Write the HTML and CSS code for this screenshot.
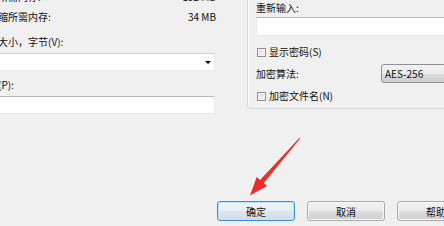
FILE: index.html
```html
<!DOCTYPE html>
<html lang="zh-CN">
<head>
<meta charset="utf-8">
<title>添加到压缩包</title>
<link rel="stylesheet" href="styles.css">
</head>
<body>
<div class="dialog">
  <div class="top">
    <div class="left">
      <div class="row r1"><span>压缩所需内存:</span><span class="val">192 MB</span></div>
      <div class="row r2"><span>解压缩所需内存:</span><span class="val">34 MB</span></div>
      <div class="label l3">分卷大小，字节(V):</div>
      <div class="field select"><span class="caret"></span></div>
      <div class="label l4">参数(P):</div>
      <div class="field input"></div>
    </div>
    <div class="group">
      <div class="label">重新输入:</div>
      <div class="field input pw"></div>
      <div class="check c1"><span class="box"></span><span>显示密码(S)</span></div>
      <div class="algo">
        <span class="algo-label">加密算法:</span>
        <span class="combo">AES-256</span>
      </div>
      <div class="check c2"><span class="box"></span><span>加密文件名(N)</span></div>
    </div>
  </div>
  <div class="buttons">
    <button class="btn default">确定</button>
    <button class="btn">取消</button>
    <button class="btn">帮助</button>
  </div>
</div>
<svg class="arrow" width="444" height="226" viewBox="0 0 444 226">
  <polygon points="300.4,138.3 299.6,137.7 260.1,179.9 256.7,176.9 250,195.5 267.2,186.1 263.9,183.1" fill="#e8302a"/>
</svg>
</body>
</html>
```
FILE: styles.css
```css
html, body {
  margin: 0;
  padding: 0;
  background: #f0f0f0;
  overflow: hidden;
}
body {
  width: 444px;
  height: 226px;
  position: relative;
  font-family: "Noto Sans CJK SC", "Noto Sans", sans-serif;
  font-size: 10px;
  color: #0f0f0f;
}
.dialog {
  display: flex;
  flex-direction: column;
}
.top {
  display: flex;
  margin-top: -20px;
  margin-left: -22px;
  height: 135px;
}
.left {
  flex: none;
  width: 237px;
  display: flex;
  flex-direction: column;
  padding-top: 10px;
}
.row {
  display: flex;
  justify-content: space-between;
  line-height: 14px;
  height: 14px;
}
.val {
  margin-right: -1px;
}
.r2 { margin-top: 6px; }
.label {
  line-height: 14px;
  height: 14px;
}
.l3 { margin-top: 11px; }
.l4 { margin-top: 7px; }
.field {
  box-sizing: border-box;
  background: #fff;
  border: 1px solid #e3e9ef;
  border-top-color: #b5b8bf;
  height: 18px;
}
.select {
  margin-top: 4px;
  border-top-color: #cfd2d6;
  display: flex;
  justify-content: flex-end;
  align-items: center;
  padding-right: 3px;
}
.caret {
  width: 0;
  height: 0;
  border-left: 3px solid transparent;
  border-right: 3px solid transparent;
  border-top: 3px solid #000;
}
.input { margin-top: 4px; }
.group {
  flex: none;
  margin-left: 32px;
  width: 230px;
  box-sizing: border-box;
  height: 129px;
  border: 1px solid #d5d9dc;
  border-radius: 3px;
  box-shadow: inset 1px 1px 0 #fafafa;
  padding: 20px 0 0 8px;
  display: flex;
  flex-direction: column;
}
.pw {
  margin-top: 2px;
  height: 19px;
}
.check {
  display: flex;
  align-items: center;
  line-height: 14px;
  height: 14px;
}
.c1 { margin-top: 9px; }
.c2 { margin-top: 6px; }
.box {
  box-sizing: border-box;
  width: 9px;
  height: 9px;
  margin-left: 1px;
  margin-right: 3px;
  border: 1px solid #8f8f8f;
  background: linear-gradient(135deg, #dcdcdc, #f7f7f7);
  box-shadow: inset 0 0 0 1px #f4f4f4;
}
.algo {
  display: flex;
  align-items: center;
  margin-top: 5px;
  height: 19px;
}
.algo-label {
  width: 125px;
}
.combo {
  box-sizing: border-box;
  height: 19px;
  flex: 1;
  border: 1px solid #8e8f8f;
  border-radius: 3px;
  background: linear-gradient(#f2f2f2, #ebebeb 50%, #dddddd 50%, #cfcfcf);
  padding-left: 3px;
  line-height: 17px;
}
.buttons {
  display: flex;
  gap: 12px;
  margin-top: 86px;
  padding-left: 217px;
}
.btn {
  flex: none;
  box-sizing: border-box;
  width: 78px;
  height: 20px;
  margin: 0;
  padding: 0;
  font-family: inherit;
  font-size: 10px;
  color: #0f0f0f;
  border: 1px solid #a8a8a8;
  border-radius: 3px;
  background: linear-gradient(#f2f2f2, #ebebeb 50%, #dddddd 50%, #cfcfcf);
  box-shadow: inset 0 0 0 1px #fbfbfb;
}
.btn.default {
  border-color: #3c8fd0;
  box-shadow: inset 0 0 0 1px #b9e6fa;
  background: linear-gradient(#f0f4f7, #e8eef2 50%, #dce6ed 50%, #d2dde6);
}
.arrow {
  position: absolute;
  left: 0;
  top: 0;
  pointer-events: none;
}
```
